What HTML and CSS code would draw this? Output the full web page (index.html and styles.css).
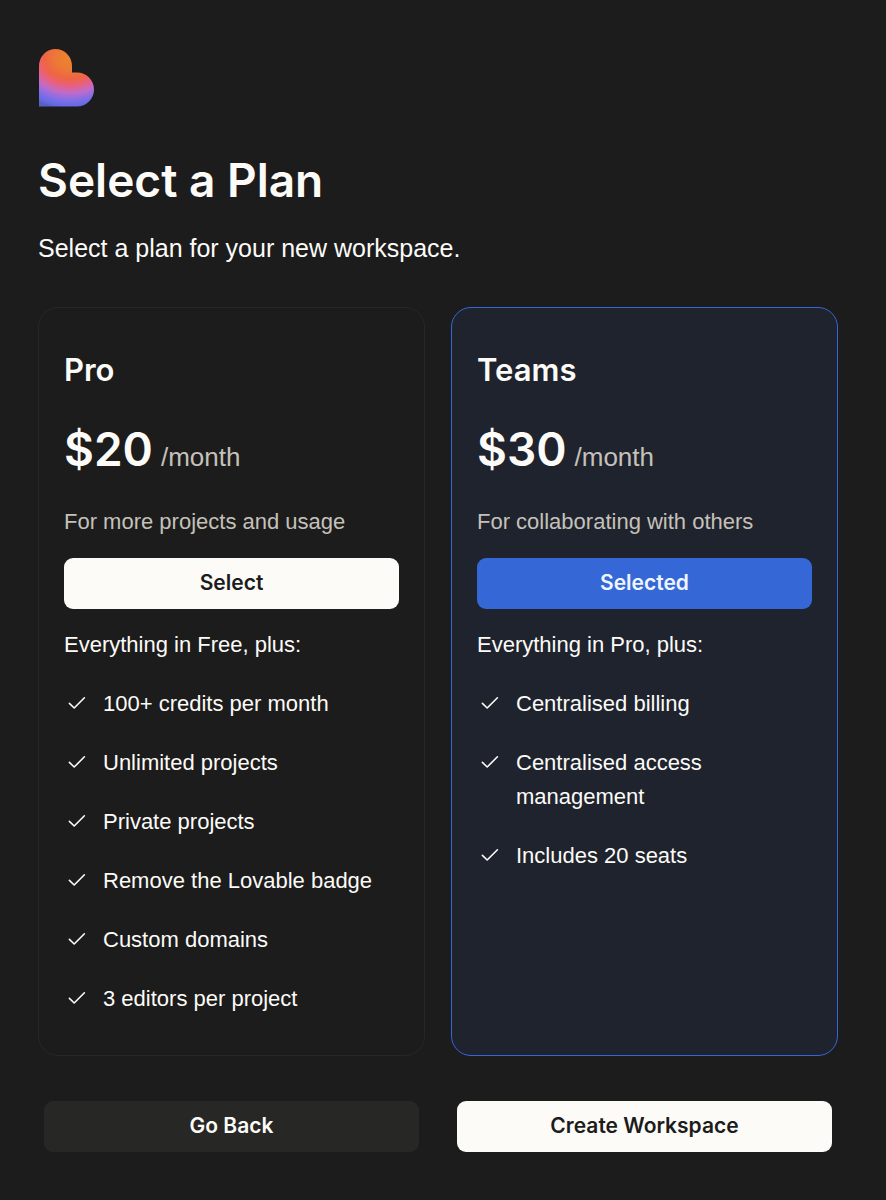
FILE: index.html
```html
<!DOCTYPE html>
<html lang="en">
<head>
<meta charset="utf-8">
<meta name="viewport" content="width=device-width, initial-scale=1">
<title>Select a Plan</title>
<link rel="stylesheet" href="styles.css">
</head>
<body>
<svg class="defs" width="0" height="0" aria-hidden="true">
  <symbol id="check" viewBox="0 0 26 26"><path d="M5.4 13.4 10.2 18 20.4 7.8" fill="none" stroke="currentColor" stroke-width="1.6" stroke-linecap="round" stroke-linejoin="round"/></symbol>
</svg>
<main class="page">
  <svg class="logo" viewBox="0 0 56 58" role="img" aria-label="Lovable">
    <defs>
      <radialGradient id="heart" gradientUnits="userSpaceOnUse" cx="0" cy="0" r="1" gradientTransform="translate(31 9) scale(62 51)">
        <stop offset="0" stop-color="#ec8430"/>
        <stop offset="0.22" stop-color="#ec7a34"/>
        <stop offset="0.42" stop-color="#ee6446"/>
        <stop offset="0.54" stop-color="#e9607c"/>
        <stop offset="0.68" stop-color="#c26bc8"/>
        <stop offset="0.84" stop-color="#7d6eea"/>
        <stop offset="0.95" stop-color="#6469e2"/>
        <stop offset="1.05" stop-color="#5560c4"/>
      </radialGradient>
    </defs>
    <path d="M0 17A16.5 17 0 0 1 33 17V23.5H38A17 17 0 0 1 38 57.5H0Z" fill="url(#heart)"/>
  </svg>
  <h1 class="title">Select a Plan</h1>
  <p class="lead">Select a plan for your new workspace.</p>

  <div class="plans">
    <section class="card">
      <h2 class="name">Pro</h2>
      <p class="price"><span class="amount">$20</span> <span class="period">/month</span></p>
      <p class="note">For more projects and usage</p>
      <button class="btn btn-light" type="button">Select</button>
      <p class="includes">Everything in Free, plus:</p>
      <ul class="features">
        <li><svg class="check"><use href="#check"/></svg><span>100+ credits per month</span></li>
        <li><svg class="check"><use href="#check"/></svg><span>Unlimited projects</span></li>
        <li><svg class="check"><use href="#check"/></svg><span>Private projects</span></li>
        <li><svg class="check"><use href="#check"/></svg><span>Remove the Lovable badge</span></li>
        <li><svg class="check"><use href="#check"/></svg><span>Custom domains</span></li>
        <li><svg class="check"><use href="#check"/></svg><span>3 editors per project</span></li>
      </ul>
    </section>
    <section class="card card-selected">
      <h2 class="name">Teams</h2>
      <p class="price"><span class="amount">$30</span> <span class="period">/month</span></p>
      <p class="note">For collaborating with others</p>
      <button class="btn btn-blue" type="button">Selected</button>
      <p class="includes">Everything in Pro, plus:</p>
      <ul class="features">
        <li><svg class="check"><use href="#check"/></svg><span>Centralised billing</span></li>
        <li><svg class="check"><use href="#check"/></svg><span>Centralised access management</span></li>
        <li><svg class="check"><use href="#check"/></svg><span>Includes 20 seats</span></li>
      </ul>
    </section>
  </div>

  <div class="actions">
    <button class="btn btn-dark" type="button">Go Back</button>
    <button class="btn btn-light" type="button">Create Workspace</button>
  </div>
</main>
</body>
</html>
```

FILE: styles.css
```css
* { box-sizing: border-box; }

body {
  margin: 0;
  background: #1c1c1c;
  color: #fcfbf8;
  font-family: "Liberation Sans", Arial, sans-serif;
  font-size: 22px;
  line-height: 34px;
}

h1, h2, p, ul { margin: 0; padding: 0; }

.title, .name, .amount, .btn {
  font-family: Inter, "Liberation Sans", sans-serif;
  font-weight: 600;
}

.defs { position: absolute; }

.page { padding: 49px 48px 48px 38px; }

.logo { display: block; width: 56px; height: 58px; margin-left: 1px; }

.title {
  margin-top: 43px;
  font-size: 46px;
  line-height: 60px;
}

.lead {
  margin-top: 21px;
  font-size: 25px;
}

.plans {
  display: grid;
  grid-template-columns: 1fr 1fr;
  gap: 26px;
  margin-top: 42px;
}

.card {
  display: flex;
  flex-direction: column;
  padding: 42px 25px 39px;
  border: 1px solid #272725;
  border-radius: 20px;
}

.card-selected {
  background: #1f232d;
  border-color: #3667d6;
}

.name {
  font-size: 31px;
  line-height: 40px;
}

.price {
  display: flex;
  align-items: baseline;
  gap: 8px;
  margin-top: 27px;
  line-height: 64px;
}

.amount { font-size: 46px; }

.period { font-size: 26px; color: #c5c1ba; }

.note {
  margin-top: 16px;
  color: #c5c1ba;
}

.btn {
  height: 51px;
  padding: 0 16px 2px;
  border: 0;
  border-radius: 9px;
  font-size: 21px;
  cursor: pointer;
}

.card .btn { margin-top: 19px; }

.btn-light { background: #fcfbf8; color: #1c1c1c; }
.btn-blue { background: #3667d6; color: #eff6ff; }
.btn-dark { background: #272725; color: #fcfbf8; }

.includes { margin-top: 19px; }

.features {
  display: flex;
  flex-direction: column;
  gap: 25px;
  margin-top: 25px;
  list-style: none;
}

.features li { display: flex; gap: 13px; }

.check { flex: none; width: 26px; height: 26px; margin-top: 3px; }

.actions {
  display: grid;
  grid-template-columns: 1fr 1fr;
  gap: 38px;
  margin-top: 45px;
  padding: 0 6px;
}
```
